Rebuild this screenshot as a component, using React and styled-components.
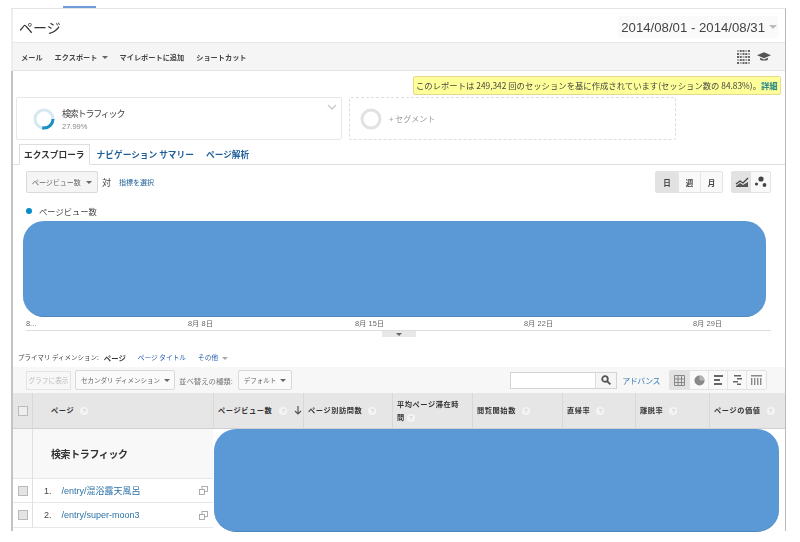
import React from "react";
import styled, { createGlobalStyle } from "styled-components";

const GlobalStyle = createGlobalStyle`
  html, body {
    margin: 0;
    padding: 0;
    background: #fff;
  }
  body {
    font-family: "Liberation Sans", "Noto Sans CJK JP", sans-serif;
    color: #333;
  }
`;

const Page = styled.div`
  position: relative;
  width: 800px;
  height: 542px;
  overflow: hidden;
  padding: 6px 14px 0 11px;
  box-sizing: border-box;
  filter: blur(0.3px);
`;

const Accent = styled.div`
  width: 33px;
  height: 2px;
  margin-left: 52px;
  background: #6f9bd8;
`;

const Panel = styled.div`
  height: 523px;
  border-top: 1px solid #e4e4e4;
  border-right: 1px solid #b9b9b9;
  box-sizing: border-box;
  overflow: hidden;
`;

const Header = styled.header`
  display: flex;
  align-items: center;
  justify-content: space-between;
  height: 34px;
  padding: 3px 7px 0 6px;
  border-left: 2px solid #eee;
  border-bottom: 1px solid #e8e8e8;
  box-sizing: border-box;
`;

const Title = styled.h1`
  margin: 0;
  font-size: 14px;
  font-weight: 400;
  color: #333;
`;

const DateBox = styled.div`
  display: flex;
  align-items: center;
  gap: 4px;
  height: 22px;
  padding: 0 1px 0 3px;
  border-radius: 2px;
  background: #fafafa;
  font-size: 13.2px;
  color: #444;
  &::after {
    content: "";
    border-top: 4px solid #bbb;
    border-left: 4px solid transparent;
    border-right: 4px solid transparent;
  }
`;

const Toolbar = styled.div`
  display: flex;
  align-items: center;
  height: 28px;
  padding: 0 14px 0 8px;
  border-left: 2px solid #eee;
  background: #f5f5f5;
  border-bottom: 1px solid #e3e3e3;
  box-sizing: border-box;
`;

const ToolItem = styled.span`
  margin-right: 12px;
  font-family: "Noto Sans CJK JP", sans-serif;
  font-size: 7.2px;
  font-weight: 700;
  color: #444;
`;

const Caret = styled.i`
  display: inline-block;
  flex: none;
  margin-left: ${(p) => p.$gap ?? 4}px;
  vertical-align: middle;
  border-top: 3px solid ${(p) => p.$color || "#666"};
  border-left: 3px solid transparent;
  border-right: 3px solid transparent;
`;

const ToolIcons = styled.div`
  display: flex;
  align-items: center;
  gap: 7px;
  margin-left: auto;
`;

const Body = styled.div`
  height: 461px;
  border-left: 2px solid #c4c4c4;
  box-sizing: border-box;
`;

const NoticeRow = styled.div`
  display: flex;
  justify-content: flex-end;
  padding: 5px 4px 0 0;
`;

const Notice = styled.div`
  height: 19px;
  width: 368px;
  padding-left: 2px;
  border: 1px solid #e6d98c;
  border-radius: 2px;
  background: #ffff99;
  box-sizing: border-box;
  font-family: "Noto Sans CJK JP", sans-serif;
  font-size: 8.35px;
  line-height: 17px;
  color: #444;
  white-space: nowrap;
  a {
    color: #2b8a8a;
    font-weight: 700;
  }
`;

const Segments = styled.div`
  display: flex;
  gap: 7px;
  margin-top: 2px;
  padding-left: 3px;
`;

const SegmentCard = styled.div`
  position: relative;
  display: flex;
  align-items: center;
  width: ${(p) => p.$w}px;
  height: 43px;
  padding-left: ${(p) => p.$pl}px;
  gap: 7px;
  border: 1px ${(p) => (p.$dashed ? "dashed #ddd" : "solid #e8e8e8")};
  border-radius: 2px;
  box-sizing: border-box;
`;

const Chevron = styled.svg`
  position: absolute;
  top: 6px;
  right: 4px;
`;

const SegmentName = styled.div`
  font-family: "Noto Sans CJK JP", sans-serif;
  font-size: 9px;
  letter-spacing: -1.2px;
  line-height: 13px;
  color: #444;
`;

const SegmentPct = styled.div`
  margin-top: 2px;
  font-size: 7.5px;
  line-height: 9px;
  color: #888;
`;

const AddSegment = styled.span`
  font-family: "Noto Sans CJK JP", sans-serif;
  font-size: 8px;
  color: #999;
`;

const Tabs = styled.nav`
  display: flex;
  align-items: flex-end;
  height: 21px;
  margin-top: 4px;
  padding-left: 6px;
  border-bottom: 1px solid #ddd;
  box-sizing: border-box;
`;

const Tab = styled.span`
  height: 21px;
  margin-right: ${(p) => p.$mr || 0}px;
  padding: 0 ${(p) => (p.$active ? 4 : 0)}px;
  margin-bottom: -1px;
  border: 1px solid ${(p) => (p.$active ? "#ddd" : "transparent")};
  border-bottom-color: ${(p) => (p.$active ? "#fff" : "transparent")};
  background: ${(p) => (p.$active ? "#fff" : "none")};
  box-sizing: border-box;
  font-family: "Noto Sans CJK JP", sans-serif;
  font-size: 8.7px;
  font-weight: 700;
  line-height: 19px;
  white-space: nowrap;
  color: ${(p) => (p.$active ? "#333" : "#1e5f99")};
`;

const MetricRow = styled.div`
  display: flex;
  align-items: center;
  height: 22px;
  margin-top: 6px;
  padding: 0 14px 0 13px;
`;

const Select = styled.div`
  display: flex;
  flex: none;
  align-items: center;
  justify-content: space-between;
  width: ${(p) => p.$w}px;
  height: ${(p) => p.$h || 22}px;
  margin-left: ${(p) => p.$ml || 0}px;
  padding: 0 ${(p) => p.$pr || 3}px 0 5px;
  border: 1px solid #d9d9d9;
  border-radius: 2px;
  background: ${(p) => p.$bg || "#f5f5f5"};
  box-sizing: border-box;
  font-family: "Noto Sans CJK JP", sans-serif;
  font-size: ${(p) => p.$fs || 7}px;
  color: #666;
  white-space: nowrap;
`;

const Versus = styled.span`
  margin-left: 4px;
  font-family: "Noto Sans CJK JP", sans-serif;
  font-size: 9px;
  color: #444;
`;

const MetricLink = styled.a`
  margin-left: 8px;
  font-family: "Noto Sans CJK JP", sans-serif;
  font-size: 7px;
  color: #1e5f99;
  white-space: nowrap;
`;

const ButtonGroup = styled.div`
  display: flex;
  flex: none;
  height: ${(p) => p.$h || 22}px;
  margin-left: ${(p) => p.$ml || 0};
  border: 1px solid #e2e2e2;
  border-radius: 2px;
  box-sizing: border-box;
`;

const GroupButton = styled.div`
  display: flex;
  align-items: center;
  justify-content: center;
  width: ${(p) => p.$w}px;
  border-left: ${(p) => (p.$first ? "none" : "1px solid #e6e6e6")};
  background: ${(p) => (p.$on ? "#e2e2e2" : "#f9f9f9")};
  box-sizing: border-box;
  font-family: "Noto Sans CJK JP", sans-serif;
  font-size: 7.5px;
  font-weight: 700;
  color: #444;
`;

const Legend = styled.div`
  display: flex;
  align-items: center;
  gap: 7px;
  height: 12px;
  margin-top: 12px;
  padding-left: 13px;
  font-family: "Noto Sans CJK JP", sans-serif;
  font-size: 8.3px;
  color: #444;
  &::before {
    content: "";
    width: 6px;
    height: 6px;
    border-radius: 50%;
    background: #058dc7;
  }
`;

const ChartBlock = styled.div`
  width: 743px;
  height: 96px;
  margin: 4px 0 0 10px;
  border-radius: 21px;
  background: #5b98d6;
  border-bottom: 1px solid #4f86bd;
  box-sizing: border-box;
`;

const AxisLabels = styled.div`
  display: flex;
  width: 745px;
  height: 13px;
  margin-left: 13px;
  border-bottom: 1px solid #ddd;
  font-size: 7.4px;
  line-height: 13px;
  color: #666;
`;

const AxisLabel = styled.span`
  width: ${(p) => p.$w}px;
  white-space: nowrap;
`;

const Handle = styled.div`
  display: flex;
  justify-content: center;
  width: 34px;
  height: 6px;
  margin-left: 369px;
  padding-top: 2px;
  background: #e8e8e8;
  box-sizing: border-box;
`;

const DimensionRow = styled.div`
  display: flex;
  align-items: center;
  height: 12px;
  margin-top: 14px;
  padding-left: 5px;
  font-family: "Noto Sans CJK JP", sans-serif;
  font-size: 6.5px;
  color: #444;
`;

const DimLink = styled.a`
  margin-left: ${(p) => p.$ml}px;
  color: ${(p) => (p.$on ? "#333" : "#2a63b0")};
  font-size: ${(p) => (p.$on ? 7.4 : 6.7)}px;
  font-weight: ${(p) => (p.$on ? 700 : 400)};
`;

const TableTools = styled.div`
  display: flex;
  align-items: center;
  height: 26px;
  margin-top: 4px;
  padding: 0 18px 0 13px;
  background: #f7f7f7;
  box-sizing: border-box;
`;

const GhostButton = styled.div`
  flex: none;
  width: 45px;
  height: 19px;
  border: 1px solid #e4e4e4;
  box-sizing: border-box;
  font-family: "Noto Sans CJK JP", sans-serif;
  font-size: 6.7px;
  line-height: 17px;
  text-align: center;
  color: #bbb;
  white-space: nowrap;
`;

const SortLabel = styled.span`
  margin: 0 5px 0 4px;
  font-family: "Noto Sans CJK JP", sans-serif;
  font-size: 7.4px;
  color: #777;
  white-space: nowrap;
`;

const SearchBox = styled.div`
  display: flex;
  flex: none;
  width: 107px;
  height: 17px;
  margin-left: auto;
  border: 1px solid #d4d4d4;
  background: #fff;
  box-sizing: border-box;
`;

const SearchButton = styled.div`
  display: flex;
  align-items: center;
  justify-content: center;
  width: 20px;
  margin-left: auto;
  border-left: 1px solid #ddd;
  background: #f5f5f5;
`;

const Advanced = styled.a`
  margin: 0 9px 0 5px;
  font-family: "Noto Sans CJK JP", sans-serif;
  font-size: 8px;
  letter-spacing: -0.5px;
  color: #3d7fb8;
  white-space: nowrap;
`;

const Grid = styled.div`
  display: grid;
  grid-template-columns: 19px 181px 90px 89px 80px 90px 73px 74px 76px;
`;

const HeadCell = styled.div`
  display: flex;
  align-items: center;
  gap: ${(p) => p.$gap || 6}px;
  height: 36px;
  padding-left: ${(p) => p.$pl || 4}px;
  border-left: ${(p) => (p.$first ? "none" : "1px solid #d8d8d8")};
  border-bottom: 1px solid #d0d0d0;
  background: #e6e6e6;
  box-sizing: border-box;
  font-family: "Noto Sans CJK JP", sans-serif;
  font-size: 7.2px;
  font-weight: 700;
  letter-spacing: 0.6px;
  line-height: 13px;
  color: #333;
  white-space: nowrap;
`;

const Help = styled.i`
  display: inline-block;
  flex: none;
  width: 8px;
  height: 8px;
  border-radius: 50%;
  background: #f4f4f4;
  font-family: "Liberation Sans", sans-serif;
  font-size: 6px;
  font-style: normal;
  font-weight: 400;
  letter-spacing: 0;
  line-height: 8px;
  text-align: center;
  color: #c4c4c4;
`;

const CheckCell = styled.div`
  display: flex;
  justify-content: center;
  align-items: center;
  height: ${(p) => p.$h}px;
  background: ${(p) => p.$bg || "#fff"};
  border-bottom: 1px solid #e8e8e8;
  box-sizing: border-box;
`;

const CheckBox = styled.span`
  width: 8px;
  height: 8px;
  border: 1px solid #bbb;
  background: ${(p) => p.$bg || "#e4e4e4"};
`;

const SegmentRow = styled.div`
  display: flex;
  align-items: center;
  height: 50px;
  padding-left: 18px;
  border-left: 1px solid #e0e0e0;
  border-bottom: 1px solid #e8e8e8;
  background: #f8f8f8;
  box-sizing: border-box;
  font-family: "Noto Sans CJK JP", sans-serif;
  font-size: 10px;
  font-weight: 700;
  letter-spacing: -0.4px;
  color: #333;
`;

const PageCell = styled.div`
  display: flex;
  align-items: center;
  height: ${(p) => p.$h}px;
  padding: 0 5px 0 11px;
  border-left: 1px solid #e0e0e0;
  border-bottom: 1px solid #e8e8e8;
  box-sizing: border-box;
  font-size: 9px;
  color: #444;
`;

const PageLink = styled.a`
  margin-left: 10px;
  color: #2e73a8;
  white-space: nowrap;
`;

const RowAction = styled.span`
  display: flex;
  margin-left: auto;
`;

const BlueOver = styled.div`
  position: absolute;
  left: 214px;
  top: 429px;
  width: 565px;
  height: 103px;
  border-radius: 22px;
  background: #5b98d6;
  border-bottom: 1px solid #4f86bd;
  box-sizing: border-box;
`;

const Fill = styled.div`
  grid-column: span 7;
  background: #fff;
`;

const Ring = ({ color, value }) => {
  const c = 2 * Math.PI * 9;
  return (
    <svg width="22" height="22" viewBox="0 0 22 22">
      <circle cx="11" cy="11" r="9" fill="none" stroke={color ? "#d6e8f2" : "#e2e2e2"} strokeWidth="3" />
      {color && (
        <circle cx="11" cy="11" r="9" fill="none" stroke={color} strokeWidth="3" strokeDasharray={`${c * value} ${c}`} />
      )}
    </svg>
  );
};

const QrIcon = () => (
  <svg width="13" height="14" viewBox="0 0 13 14">
    {[0, 1, 2, 3, 4].flatMap((r) =>
      [0, 1, 2, 3, 4].map((c) => (
        <rect key={`${r}-${c}`} x={c * 2.75} y={r * 3} width="2" height="2" fill={(r * 2 + c) % 3 ? "#666" : "#aaa"} />
      ))
    )}
  </svg>
);

const CapIcon = () => (
  <svg width="14" height="11" viewBox="0 0 16 12" fill="#555">
    <path d="M8 1 16 4.5 8 8 0 4.5z" />
    <path d="M3.5 7.5v2.2C5 11 11 11 12.5 9.7V7.5L8 9.5z" />
  </svg>
);

const AreaIcon = () => (
  <svg width="14" height="11" viewBox="0 0 14 11" fill="none" stroke="#444" strokeWidth="1.3">
    <path d="M1 7 5 4l3 2 5-5" />
    <path d="M1 10h12V5L8 8 5 6 1 9z" fill="#555" stroke="none" />
  </svg>
);

const DotsIcon = () => (
  <svg width="13" height="12" viewBox="0 0 13 12" fill="#444">
    <circle cx="7" cy="3" r="2.6" />
    <circle cx="2.5" cy="8" r="1.6" />
    <circle cx="10.5" cy="9" r="1.9" />
  </svg>
);

const TableIcon = () => (
  <svg width="11" height="11" viewBox="0 0 11 11" fill="none" stroke="#888">
    <path d="M.5.5h10v10H.5zM.5 4h10M.5 7.500h10M4 .5v10M7.500.5v10" />
  </svg>
);

const PieIcon = () => (
  <svg width="11" height="11" viewBox="0 0 11 11">
    <circle cx="5.5" cy="5.5" r="5" fill="#888" />
    <path d="M5.5 5.5V.5A5 5 0 0 1 10.5 5.5z" fill="#b5b5b5" />
  </svg>
);

const BarsIcon = () => (
  <svg width="9" height="10" viewBox="0 0 9 10" fill="#666">
    <rect width="9" height="2" />
    <rect y="4" width="6" height="2" />
    <rect y="8" width="8" height="2" />
  </svg>
);

const CompareIcon = () => (
  <svg width="9" height="10" viewBox="0 0 9 10" fill="#666">
    <rect x="1" width="7" height="1.5" />
    <rect x="4" y="3" width="5" height="1.5" />
    <rect y="6" width="5" height="1.5" />
    <rect x="4" y="8.5" width="4" height="1.5" />
  </svg>
);

const PivotIcon = () => (
  <svg width="11" height="10" viewBox="0 0 11 10" fill="#888">
    <rect width="11" height="1.5" />
    {[0, 3, 6, 9].map((x) => (
      <rect key={x} x={x} y="3" width="1.4" height="7" />
    ))}
  </svg>
);

const SearchIcon = () => (
  <svg width="10" height="10" viewBox="0 0 10 10" fill="none" stroke="#555" strokeWidth="1.8">
    <circle cx="4" cy="4" r="2.8" />
    <path d="m6 6 3.4 3.4" />
  </svg>
);

const WindowIcon = () => (
  <svg width="9" height="9" viewBox="0 0 9 9" fill="#fff" stroke="#999" strokeWidth="0.8">
    <rect x="3" y=".5" width="5.5" height="5" />
    <rect x=".5" y="3.5" width="5" height="5" />
  </svg>
);

const SortArrow = () => (
  <svg width="8" height="9" viewBox="0 0 8 9" fill="none" stroke="#555" strokeWidth="1.2">
    <path d="M4 0v8M1 5l3 3 3-3" />
  </svg>
);

const columns = ["ページ別訪問数", "平均ページ滞在時間", "閲覧開始数", "直帰率", "離脱率", "ページの価値"];

const App = () => (
  <Page>
    <GlobalStyle />
    <Accent />
    <Panel>
      <Header>
        <Title>ページ</Title>
        <DateBox>2014/08/01 - 2014/08/31</DateBox>
      </Header>
      <Toolbar>
        <ToolItem>メール</ToolItem>
        <ToolItem>
          エクスポート
          <Caret />
        </ToolItem>
        <ToolItem>マイレポートに追加</ToolItem>
        <ToolItem>ショートカット</ToolItem>
        <ToolIcons>
          <QrIcon />
          <CapIcon />
        </ToolIcons>
      </Toolbar>
      <Body>
        <NoticeRow>
          <Notice>
            このレポートは 249,342 回のセッションを基に作成されています(セッション数の 84.83%)。<a>詳細</a>
          </Notice>
        </NoticeRow>
        <Segments>
          <SegmentCard $w={326} $pl={16}>
            <Ring color="#1b8fc4" value={0.28} />
            <div>
              <SegmentName>検索トラフィック</SegmentName>
              <SegmentPct>27.99%</SegmentPct>
            </div>
            <Chevron width="10" height="6" viewBox="0 0 10 6" fill="none" stroke="#ccc" strokeWidth="1.5">
              <path d="m1 1 4 4 4-4" />
            </Chevron>
          </SegmentCard>
          <SegmentCard $w={327} $pl={10} $dashed>
            <Ring />
            <AddSegment>+ セグメント</AddSegment>
          </SegmentCard>
        </Segments>
        <Tabs>
          <Tab $active $mr={6}>エクスプローラ</Tab>
          <Tab $mr={10}>ナビゲーション サマリー</Tab>
          <Tab>ページ解析</Tab>
        </Tabs>
        <MetricRow>
          <Select $w={72} $pr={5}>
            ページビュー数
            <Caret $gap={0} />
          </Select>
          <Versus>対</Versus>
          <MetricLink>指標を選択</MetricLink>
          <ButtonGroup $ml="auto">
            <GroupButton $w={22} $first $on>日</GroupButton>
            <GroupButton $w={22}>週</GroupButton>
            <GroupButton $w={22}>月</GroupButton>
          </ButtonGroup>
          <ButtonGroup $ml="8px">
            <GroupButton $w={19} $first $on>
              <AreaIcon />
            </GroupButton>
            <GroupButton $w={19} $first>
              <DotsIcon />
            </GroupButton>
          </ButtonGroup>
        </MetricRow>
        <Legend>ページビュー数</Legend>
        <ChartBlock />
        <AxisLabels>
          <AxisLabel $w={162}>8...</AxisLabel>
          <AxisLabel $w={167}>8月 8日</AxisLabel>
          <AxisLabel $w={169}>8月 15日</AxisLabel>
          <AxisLabel $w={169}>8月 22日</AxisLabel>
          <AxisLabel>8月 29日</AxisLabel>
        </AxisLabels>
        <Handle>
          <Caret $gap={0} />
        </Handle>
        <DimensionRow>
          プライマリ ディメンション:
          <DimLink $ml={5} $on>ページ</DimLink>
          <DimLink $ml={12}>ページ タイトル</DimLink>
          <DimLink $ml={12}>
            その他
            <Caret $color="#aaa" />
          </DimLink>
        </DimensionRow>
        <TableTools>
          <GhostButton>グラフに表示</GhostButton>
          <Select $w={100} $h={20} $bg="#fafafa" $fs={6.5} $ml={4} $pr={4}>
            セカンダリ ディメンション
            <Caret $gap={0} />
          </Select>
          <SortLabel>並べ替えの種類:</SortLabel>
          <Select $w={54} $h={20} $bg="#fafafa" $fs={6.5} $pr={5}>
            デフォルト
            <Caret $gap={0} />
          </Select>
          <SearchBox>
            <SearchButton>
              <SearchIcon />
            </SearchButton>
          </SearchBox>
          <Advanced>アドバンス</Advanced>
          <ButtonGroup $h={20}>
            <GroupButton $w={19} $first $on><TableIcon /></GroupButton>
            <GroupButton $w={19}><PieIcon /></GroupButton>
            <GroupButton $w={19}><BarsIcon /></GroupButton>
            <GroupButton $w={19}><CompareIcon /></GroupButton>
            <GroupButton $w={20}><PivotIcon /></GroupButton>
          </ButtonGroup>
        </TableTools>
        <Grid>
          <HeadCell $first $pl={5}>
            <CheckBox $bg="#eee" />
          </HeadCell>
          <HeadCell $pl={18}>
            ページ <Help>?</Help>
          </HeadCell>
          <HeadCell $gap={7}>
            ページビュー数 <Help>?</Help> <SortArrow />
          </HeadCell>
          {columns.map((name, i) => (
            <HeadCell key={name}>
              {i === 1 ? (
                <span>
                  平均ページ滞在時
                  <br />
                  間 <Help>?</Help>
                </span>
              ) : (
                <>
                  {name} <Help>?</Help>
                </>
              )}
            </HeadCell>
          ))}
          <CheckCell $h={50} $bg="#f8f8f8" />
          <SegmentRow>検索トラフィック</SegmentRow>
          <Fill />
          <CheckCell $h={24}>
            <CheckBox />
          </CheckCell>
          <PageCell $h={24}>
            1.
            <PageLink>/entry/混浴露天風呂</PageLink>
            <RowAction><WindowIcon /></RowAction>
          </PageCell>
          <Fill />
          <CheckCell $h={25}>
            <CheckBox />
          </CheckCell>
          <PageCell $h={25}>
            2.
            <PageLink>/entry/super-moon3</PageLink>
            <RowAction><WindowIcon /></RowAction>
          </PageCell>
          <Fill />
        </Grid>
      </Body>
    </Panel>
    <BlueOver />
  </Page>
);

export default App;
